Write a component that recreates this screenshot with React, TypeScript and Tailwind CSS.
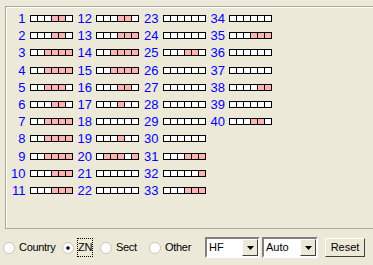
import React from "react";

const columns: [number, string][][] = [
  [
    [1, "000110"],
    [2, "000110"],
    [3, "001111"],
    [4, "001111"],
    [5, "001110"],
    [6, "000110"],
    [7, "001111"],
    [8, "001111"],
    [9, "001111"],
    [10, "000111"],
    [11, "000111"],
  ],
  [
    [12, "000110"],
    [13, "000111"],
    [14, "001111"],
    [15, "001111"],
    [16, "000110"],
    [17, "000100"],
    [18, "000000"],
    [19, "000100"],
    [20, "011101"],
    [21, "000000"],
    [22, "000000"],
  ],
  [
    [23, "000000"],
    [24, "000000"],
    [25, "000110"],
    [26, "000000"],
    [27, "000000"],
    [28, "000000"],
    [29, "000000"],
    [30, "000000"],
    [31, "000111"],
    [32, "000001"],
    [33, "000111"],
  ],
  [
    [34, "000000"],
    [35, "000111"],
    [36, "000000"],
    [37, "000000"],
    [38, "000011"],
    [39, "000000"],
    [40, "000110"],
  ],
];

function Cells({ bits }: { bits: string }) {
  return (
    <div className="flex h-[7px] border-l border-t border-b border-black">
      {bits.split("").map((b, i) => (
        <div
          key={i}
          className={`w-[7px] border-r border-black ${b === "1" ? "bg-[#ffb4b4]" : "bg-white"}`}
        />
      ))}
    </div>
  );
}

function Radio({
  label,
  width,
  checked,
  focus,
}: {
  label: string;
  width: string;
  checked?: boolean;
  focus?: boolean;
}) {
  return (
    <label className={`flex items-center gap-[4px] ${width}`}>
      <svg width="12" height="12" viewBox="0 0 12 12">
        <circle cx="6" cy="6" r="5.5" fill="#fff" stroke="#c9c6b8" />
        {checked && <circle cx="6" cy="6" r="1.8" fill="#000" />}
      </svg>
      <span className={focus ? "outline outline-1 outline-dotted outline-black" : ""}>{label}</span>
    </label>
  );
}

function Select({ value, width }: { value: string; width: string }) {
  return (
    <div className={`flex h-[21px] ${width} border-2 border-[#808080] border-b-white border-r-white bg-white`}>
      <div className="flex-1 pl-[2px] leading-[17px]">{value}</div>
      <div className="flex w-[16px] items-center justify-center border border-white border-b-[#404040] border-r-[#404040] bg-[#ece9d8]">
        <svg width="7" height="4" viewBox="0 0 7 4">
          <path d="M0 0h7L3.5 4z" fill="#000" />
        </svg>
      </div>
    </div>
  );
}

export default function App() {
  return (
    <div
      className="flex h-[265px] w-[373px] flex-col overflow-hidden bg-[#ece9d8] pl-[5px] pt-[6px] text-[11px]"
      style={{ fontFamily: '"Liberation Sans", Arial, sans-serif' }}
    >
      <div className="h-[223px] w-[380px] border border-[#aca899] shadow-[inset_1px_1px_0_#fff]">
        <div className="grid grid-cols-[repeat(4,66.5px)] pt-[3px]">
          {columns.map((col, ci) => (
            <div key={ci} className="flex flex-col">
              {col.map(([n, bits]) => (
                <div key={n} className="flex h-[17.2px] items-center">
                  <span className="w-[20px] text-right text-[13px] leading-none text-[#0000ff]">{n}</span>
                  <div className="ml-[4px]">
                    <Cells bits={bits} />
                  </div>
                </div>
              ))}
            </div>
          ))}
        </div>
      </div>
      <div className="flex flex-1 items-center pr-[8px] pt-[1px] text-black">
        <div className="-ml-[2px] flex items-center tracking-[-0.3px]">
          <Radio label="Country" width="w-[59px]" />
          <Radio label="ZN" width="w-[38px]" checked focus />
          <Radio label="Sect" width="w-[49px]" />
          <Radio label="Other" width="w-[50px]" />
        </div>
        <div className="ml-auto flex items-center gap-[2px]">
          <Select value="HF" width="w-[55px]" />
          <Select value="Auto" width="w-[56px]" />
          <button className="ml-[5px] h-[19px] w-[40px] border border-white border-b-[#404040] border-r-[#404040] bg-[#ece9d8]">
            Reset
          </button>
        </div>
      </div>
    </div>
  );
}
